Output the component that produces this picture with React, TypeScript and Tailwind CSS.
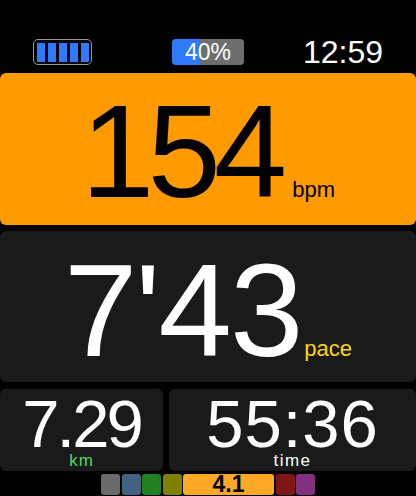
const zones = [
  { color: 'bg-[#6a6a6a]', label: '' },
  { color: 'bg-[#416283]', label: '' },
  { color: 'bg-[#21801f]', label: '' },
  { color: 'bg-[#808000]', label: '' },
  { color: 'bg-[#ffa826]', label: '4.1' },
  { color: 'bg-[#801516]', label: '' },
  { color: 'bg-[#80307f]', label: '' },
];

function Battery() {
  return (
    <div className="flex h-[26px] w-[59px] items-center justify-center gap-[3px] rounded-[5px] border border-[#9a9a9a]">
      {[0, 1, 2, 3, 4].map((i) => (
        <span key={i} className="h-[19px] w-[8px] bg-[#2f7bff]"></span>
      ))}
    </div>
  );
}

export default function App() {
  return (
    <div className="flex h-[496px] w-[416px] flex-col overflow-hidden bg-black font-['Liberation_Sans',Arial,sans-serif]">
      {/* Status bar */}
      <div className="grid h-[73px] grid-cols-3 items-start px-[33px] pt-[39px]">
        <div className="justify-self-start">
          <Battery />
        </div>
        <div className="flex h-[26px] w-[72px] items-center justify-center justify-self-center rounded-[4px] bg-[linear-gradient(to_right,#2f7bff_27px,#6e6e6e_27px)] text-[23px] leading-none text-white">
          40%
        </div>
        <div className="-mt-[3px] justify-self-end text-[32px] leading-none text-white">12:59</div>
      </div>

      {/* Heart rate */}
      <div className="flex h-[152px] items-start justify-center rounded-[6px] bg-[#ff9a00] pt-[13px] text-black">
        <div className="flex items-baseline">
          <span className="text-[132px] leading-none tracking-[-7px]">154</span>
          <span className="ml-[12px] text-[22px] leading-none">bpm</span>
        </div>
      </div>

      {/* Pace */}
      <div className="mt-[6px] flex h-[151px] items-start justify-center rounded-[6px] bg-[#1a1a1a] pt-[14px]">
        <div className="flex items-baseline">
          <span className="text-[132px] leading-none tracking-[-2px] text-white">7'43</span>
          <span className="ml-[3px] text-[22px] leading-none text-[#ffd60a]">pace</span>
        </div>
      </div>

      {/* Distance + time */}
      <div className="mt-[7px] grid h-[82px] grid-cols-[163px_1fr] gap-[6px]">
        <div className="flex flex-col items-center rounded-[6px] bg-[#1a1a1a] pt-[5px]">
          <span className="text-[67px] leading-[60px] tracking-[-3px] text-white">7.29</span>
          <span className="text-[17px] leading-[14px] tracking-[1px] text-[#4cd964]">km</span>
        </div>
        <div className="flex flex-col items-center rounded-[6px] bg-[#1a1a1a] pt-[5px]">
          <span className="text-[67px] leading-[60px] tracking-[1px] text-white">55:36</span>
          <span className="text-[17px] leading-[14px] tracking-[1.5px] text-white">time</span>
        </div>
      </div>

      {/* Zone bar */}
      <div className="mt-[3px] flex h-[21px] justify-center gap-[1.5px]">
        {zones.map((z, i) => (
          <div
            key={i}
            className={`flex items-center justify-center rounded-[3px] ${z.color} ${z.label ? 'w-[91px]' : 'w-[19px]'}`}
          >
            {z.label && <span className="text-[23px] font-bold leading-none text-black">{z.label}</span>}
          </div>
        ))}
      </div>
    </div>
  );
}
